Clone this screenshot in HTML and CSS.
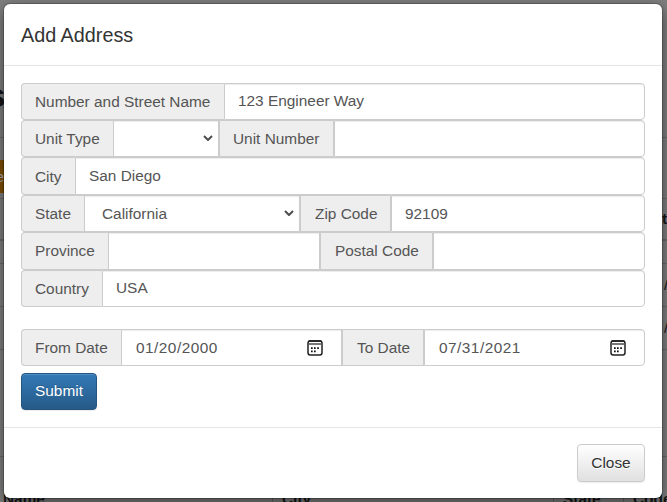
FILE: index.html
```html
<!DOCTYPE html>
<html lang="en">
<head>
<meta charset="utf-8">
<title>Add Address</title>
<link rel="stylesheet" href="styles.css">
</head>
<body>
<svg class="defs" width="0" height="0" aria-hidden="true">
  <symbol id="calendar" viewBox="0 0 16 16">
    <rect x="1" y="1" width="14" height="14" rx="2.2" fill="none" stroke="#222" stroke-width="1.5"/>
    <path d="M2 4h12" stroke="#777" stroke-width="2"/>
    <path d="M1.5 1h13" stroke="#111" stroke-width="1.3"/>
    <path d="M4 7.2h1.7v1.7H4zM7 7.2h1.7v1.7H7zM10.2 7.2h1.7v1.7h-1.7zM4 10.6h1.7v1.7H4zM7 10.6h1.7v1.7H7z" fill="#111"/>
  </symbol>
  <symbol id="chevron" viewBox="0 0 10 6"><path d="M1 1l4 4 4-4" fill="none" stroke="#4d4d4d" stroke-width="2"/></symbol>
</svg>
<div class="page" aria-hidden="true">
  <b class="bg-title">s</b>
  <span class="bg-button">e</span>
  <i class="rule r1"></i><i class="rule r2"></i><i class="rule r3 thick"></i><i class="rule r4"></i><i class="rule r5"></i><i class="rule r6"></i><i class="rule r7"></i>
  <b class="bg-t">t</b><span class="bg-slash s1">/</span><span class="bg-slash s2">/</span>
  <b class="bg-head h1">Name</b><b class="bg-head h2">City</b><b class="bg-head h3">State</b><b class="bg-head h4">Code</b>
  <i class="col c1"></i><i class="col c2"></i><i class="col c3"></i>
</div>
<main class="modal">
  <header class="head"><h4>Add Address</h4></header>
  <section class="body">
    <div class="row"><label class="w203">Number and Street Name</label><div class="field grow">123 Engineer Way</div></div>
    <div class="row"><label class="w92">Unit Type</label><div class="field w106 end select"><svg class="chev"><use href="#chevron"/></svg></div><label class="w115 mid near">Unit Number</label><div class="field grow"></div></div>
    <div class="row tall city"><label class="w54">City</label><div class="field grow low">San Diego</div></div>
    <div class="row"><label class="w63">State</label><div class="field w216 end select">California<svg class="chev"><use href="#chevron"/></svg></div><label class="w91 mid">Zip Code</label><div class="field grow low">92109</div></div>
    <div class="row tall"><label class="w87">Province</label><div class="field w212 end"></div><label class="w113 mid">Postal Code</label><div class="field grow"></div></div>
    <div class="row"><label class="w81">Country</label><div class="field grow">USA</div></div>
    <div class="row dates"><label class="w100">From Date</label><div class="field w221 end date">01/20/2000<svg class="cal"><use href="#calendar"/></svg></div><label class="w82 mid">To Date</label><div class="field grow date">07/31/2021<svg class="cal"><use href="#calendar"/></svg></div></div>
    <button class="btn submit">Submit</button>
  </section>
  <footer class="foot"><button class="btn close">Close</button></footer>
</main>
</body>
</html>
```
FILE: styles.css
```css
* { box-sizing: border-box; }
body { margin: 0; width: 667px; height: 502px; overflow: hidden; background: #7f7f7f; font: 15.4px/22px "Liberation Sans", Arial, sans-serif; color: #555; }
.defs { position: absolute; }
.page { position: absolute; inset: 0; overflow: hidden; color: #161616; }
.page > * { position: absolute; }
.bg-title { font-size: 33px; line-height: 36px; left: -13px; top: 78px; }
.bg-button { left: -30px; top: 160px; width: 34px; height: 33px; padding: 6px 0; background: #805000; color: #aaa; text-align: right; }
.rule { left: 0; width: 667px; height: 1px; background: #6a6a6a; }
.rule.thick { height: 2px; }
.r1 { top: 137px; } .r2 { top: 198px; } .r3 { top: 239px; } .r4 { top: 263px; } .r5 { top: 306px; } .r6 { top: 349px; } .r7 { top: 456px; }
.bg-t { left: 662px; top: 208px; }
.bg-slash { left: 664px; }
.s1 { top: 274px; } .s2 { top: 317px; }
.bg-head { top: 488px; }
.h1 { left: 3px; } .h2 { left: 282px; } .h3 { left: 563px; } .h4 { left: 633px; }
.col { width: 1px; height: 8px; top: 494px; background: #666; }
.c1 { left: 272px; } .c2 { left: 553px; } .c3 { left: 623px; }

.modal { position: absolute; left: 4px; top: 4px; width: 658px; height: 494px; background: #fff; border-radius: 6px; box-shadow: 0 0 0 1px rgba(0,0,0,.2), 0 5px 16px rgba(0,0,0,.5); display: flex; flex-direction: column; }
.head { height: 62px; border-bottom: 1px solid #e5e5e5; padding: 19px 17px 0; }
h4 { margin: 0; font-size: 19.8px; line-height: 24px; font-weight: 400; color: #333; }
.body { padding: 17px 17px 0; height: 361px; }
.row { display: flex; height: 37px; }
.row.tall { height: 38px; }
.row label { flex: none; background: #eee; border: 1px solid #ccc; border-right: 0; padding: 7px 0 0 13px; line-height: 21px; white-space: nowrap; border-radius: 4px 0 0 4px; }
.row label.mid { border-right: 1px solid #ccc; border-radius: 0; padding-left: 14px; }
.row label.near { padding-left: 13px; }
.row.city label { padding-top: 8px; }
.field { flex: none; display: flex; align-items: flex-start; background: #fff; border: 1px solid #ccc; padding: 6px 13px 0; line-height: 21px; box-shadow: inset 0 1px 1px rgba(0,0,0,.075); }
.field.grow { flex: 1; border-radius: 0 4px 4px 0; }
.field.low { padding-top: 7px; }
.field.select { padding: 7px 5px 0 17px; }
.chev { width: 10px; height: 6px; margin: 7px 0 0 auto; }
.field.date { padding: 7px 18px 0 14px; letter-spacing: .48px; }
.cal { width: 16px; height: 16px; margin: 3px 0 0 auto; }
.dates { margin-top: 22px; }
.w203 { width: 203px; } .w92 { width: 92px; } .w106 { width: 106px; } .w115 { width: 115px; }
.w54 { width: 54px; } .w63 { width: 63px; } .w216 { width: 216px; } .w91 { width: 91px; }
.w87 { width: 87px; } .w212 { width: 212px; } .w113 { width: 113px; } .w81 { width: 81px; }
.w100 { width: 100px; } .w221 { width: 221px; } .w82 { width: 82px; }
.btn { font: inherit; border-radius: 4px; padding: 0; display: block; }
.submit { margin-top: 7px; width: 76px; height: 37px; padding-bottom: 2px; color: #fff; border: 1px solid #245580; background: linear-gradient(#337ab7, #265a88); text-shadow: 0 -1px 0 rgba(0,0,0,.2); box-shadow: inset 0 1px 0 rgba(255,255,255,.15), 0 1px 1px rgba(0,0,0,.075); }
.foot { border-top: 1px solid #e5e5e5; padding: 16px 17px; height: 71px; display: flex; justify-content: flex-end; }
.close { width: 68px; height: 38px; color: #333; border: 1px solid #ccc; background: linear-gradient(#fff, #e0e0e0); text-shadow: 0 1px 0 #fff; box-shadow: inset 0 1px 0 rgba(255,255,255,.15), 0 1px 1px rgba(0,0,0,.075); }
```
